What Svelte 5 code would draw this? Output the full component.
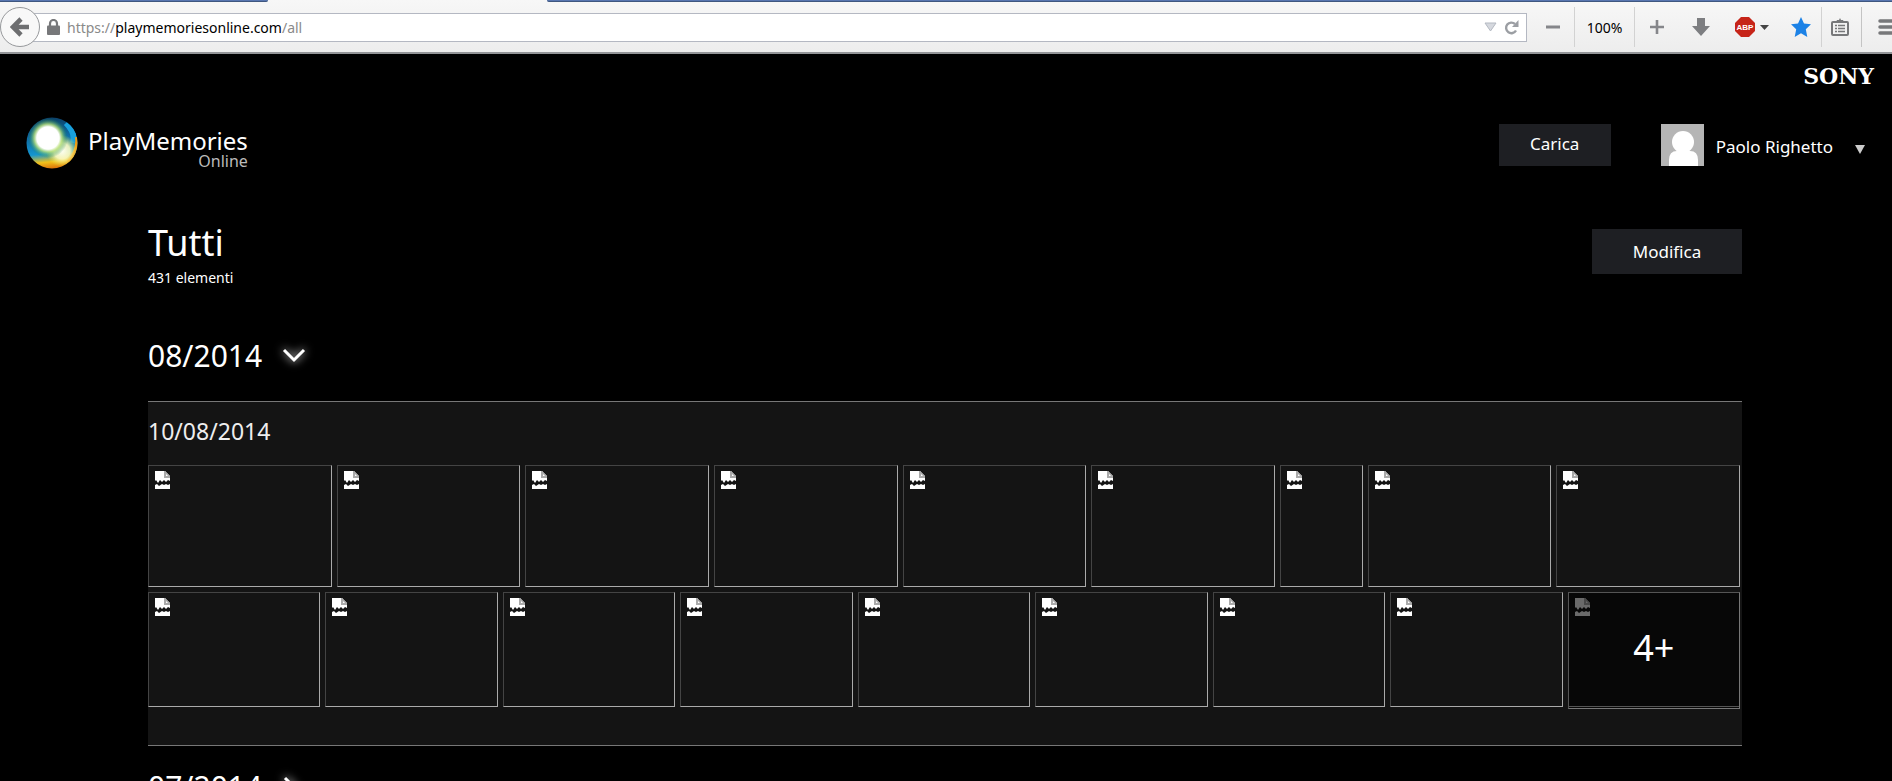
<script lang="ts">
    const rows = [
        { height: 122, spans: [184, 184, 184, 184, 184, 184, 83, 184, 184] },
        { height: 115, spans: [1, 1, 1, 1, 1, 1, 1, 1, 1] },
    ];

    let url = $state("https://playmemoriesonline.com/all");
</script>

{#snippet brokenImage()}
    <svg class="broken" width="16" height="18" viewBox="0 0 16 18">
        <path d="M0 0h10l5 5v5l-2-1-2 2-2-2-2 2-2-2-2 3-2-3-1 1z" fill="#fff" />
        <path d="M10 0l5 5v2H9V0z" fill="#aaa" />
        <path d="M11 3l2 2h-2z" fill="#fff" />
        <path d="M0 14l2-1 2 2 3-2 2 1 2-1 2 1 2-1v5H0z" fill="#fff" />
    </svg>
{/snippet}

<div class="browser">
    <div class="tabs">
        <div class="tab-left"></div>
        <div class="tab-right"></div>
    </div>
    <div class="toolbar">
        <button class="back" aria-label="Indietro">
            <svg width="20" height="20" viewBox="0 0 20 20">
                <path d="M11 2L3 10l8 8M4 10h15" fill="none" stroke="#6d6e70" stroke-width="4.6" />
            </svg>
        </button>
        <div class="address">
            <svg width="13" height="16" viewBox="0 0 13 16">
                <path d="M3 8V4.500a3.500 3.500 0 0 1 7 0V8" fill="none" stroke="#77787a" stroke-width="2.200" />
                <rect y="6.500" width="13" height="9.500" rx="1" fill="#77787a" />
            </svg>
            <label class="url">
                <span class="url-text"><span>https://</span>playmemoriesonline.com<span>/all</span></span>
                <input type="text" aria-label="Indirizzo" bind:value={url} />
            </label>
            <button aria-label="Cronologia">
                <svg width="13" height="10" viewBox="0 0 13 10">
                    <path d="M1 1h11L6.500 9z" fill="#d5d8de" stroke="#b4b9c2" />
                </svg>
            </button>
            <button aria-label="Ricarica">
                <svg width="15" height="15" viewBox="0 0 15 15">
                    <path d="M11 4A5.300 5.300 0 1 0 12 10.500" fill="none" stroke="#9b9ea3" stroke-width="2.400" />
                    <path d="M14.500 0v7H8z" fill="#9b9ea3" />
                </svg>
            </button>
        </div>
        <div class="tools">
            <button class="minus" aria-label="Riduci">
                <svg width="14" height="14" viewBox="0 0 14 14"><path d="M0 7h14" stroke="#85868a" stroke-width="3" /></svg>
            </button>
            <button class="zoom">100%</button>
            <button class="plus" aria-label="Ingrandisci">
                <svg width="14" height="14" viewBox="0 0 14 14"><path d="M0 7h14M7 0v14" stroke="#85868a" stroke-width="2.600" /></svg>
            </button>
            <button class="download" aria-label="Download">
                <svg width="18" height="18" viewBox="0 0 18 18"><path d="M5 0h8v8h5l-9 10L0 8h5z" fill="#7d7e81" /></svg>
            </button>
            <button class="abp" aria-label="Adblock Plus">
                <svg width="34" height="20" viewBox="0 0 34 20">
                    <path d="M6 0h8l6 6v8l-6 6H6l-6-6V6z" fill="#c62418" />
                    <text x="10" y="13" text-anchor="middle">ABP</text>
                    <path d="M25 8h9l-4.500 5z" fill="#444" />
                </svg>
            </button>
            <button class="star" aria-label="Segnalibro">
                <svg width="20" height="20" viewBox="0 0 20 20">
                    <path d="M10 0l3 6.500 7 .8-5.200 4.900L16.300 20 10 16.200 3.700 20l1.500-7.800L0 7.300l7-.8z" fill="#1c82e6" />
                </svg>
            </button>
            <button class="list" aria-label="Segnalibri">
                <svg width="18" height="18" viewBox="0 0 18 18">
                    <rect x="1" y="4" width="16" height="13" rx="1" fill="none" stroke="#77787a" stroke-width="2" />
                    <path d="M4 7.500h2M7 7.500h7M4 10.500h2M7 10.500h7M4 13.500h2M7 13.500h7" stroke="#77787a" stroke-width="1.500" />
                    <path d="M5 4l1-2h2l1-2 1 2h2l1 2z" fill="#77787a" />
                </svg>
            </button>
            <button class="menu" aria-label="Menu">
                <svg width="20" height="18" viewBox="0 0 20 18"><path d="M2 3h16M2 9h16M2 15h16" stroke="#77787a" stroke-width="3.500" stroke-linecap="round" /></svg>
            </button>
        </div>
    </div>
</div>

<div class="page">
    <div class="sony">SONY</div>
    <header>
        <a class="logo" href="/all">
            <svg width="52" height="52" viewBox="0 0 52 52">
                <defs>
                    <linearGradient id="ball" x1="0.400" y1="0" x2="0.500" y2="1">
                        <stop offset="0" stop-color="#0b3d63" />
                        <stop offset="0.400" stop-color="#0f6fa8" />
                        <stop offset="0.700" stop-color="#1596d0" />
                        <stop offset="0.860" stop-color="#f2c21c" />
                        <stop offset="1" stop-color="#dc6d08" />
                    </linearGradient>
                    <radialGradient id="glow">
                        <stop offset="0.560" stop-color="#fff" />
                        <stop offset="0.700" stop-color="#b9e27a" stop-opacity="0.800" />
                        <stop offset="1" stop-color="#0b7c52" stop-opacity="0" />
                    </radialGradient>
                    <radialGradient id="shine">
                        <stop offset="0" stop-color="#fffff0" />
                        <stop offset="0.500" stop-color="#fffbc0" stop-opacity="0.900" />
                        <stop offset="1" stop-color="#e6e33c" stop-opacity="0" />
                    </radialGradient>
                    <clipPath id="disc"><circle cx="26" cy="26" r="25.500" /></clipPath>
                </defs>
                <g clip-path="url(#disc)">
                    <rect width="52" height="52" fill="url(#ball)" />
                    <path d="M40 6Q50 16 47 26" fill="none" stroke="#18a0dc" stroke-width="6" />
                    <path d="M51 20Q53 33 42 45" fill="none" stroke="#f09a13" stroke-width="4" />
                    <circle cx="36" cy="34" r="16" fill="url(#shine)" />
                    <circle cx="22" cy="21" r="20" fill="url(#glow)" />
                </g>
            </svg>
            <span class="brand">PlayMemories<small>Online</small></span>
        </a>
        <button class="upload">Carica</button>
        <button class="user">
            <svg width="43" height="42" viewBox="0 0 43 42">
                <rect width="43" height="42" fill="#b5b5b5" />
                <circle cx="22" cy="18" r="11" fill="#fff" />
                <path d="M8 42v-6q0-9 8-9h13q8 0 8 9v6z" fill="#fff" />
            </svg>
            <span>Paolo Righetto</span>
            <svg class="caret" width="10" height="9" viewBox="0 0 10 9"><path d="M0 0h10L5 9z" fill="#ccc" /></svg>
        </button>
    </header>

    <main>
        <div class="title">
            <div>
                <h1>Tutti</h1>
                <p>431 elementi</p>
            </div>
            <button>Modifica</button>
        </div>

        <h2>
            08/2014
            <button class="toggle" aria-label="Chiudi">
                <svg width="22" height="14" viewBox="0 0 22 14"><path d="M1 1l10 10L21 1" /></svg>
            </button>
        </h2>
        <section>
            <h3>10/08/2014</h3>
            {#each rows as row, r}
                <div
                    class="row"
                    style="height: {row.height}px; grid-template-columns: {row.spans.map((s) => s + 'fr').join(' ')}"
                >
                    {#each row.spans as _, i}
                        {#if r === 1 && i === 8}
                            <a class="photo more" href="/all">
                                {@render brokenImage()}
                                <span>4+</span>
                            </a>
                        {:else}
                            <a class="photo" href="/all" aria-label="Foto">
                                {@render brokenImage()}
                            </a>
                        {/if}
                    {/each}
                </div>
            {/each}
        </section>

        <h2>
            07/2014
            <button class="toggle" aria-label="Apri">
                <svg width="14" height="20" viewBox="0 0 14 20"><path d="M2 1l9 9-9 9" /></svg>
            </button>
        </h2>
    </main>
</div>

<style>
    :global(body) {
        background: #000;
        overflow: hidden;
    }
    :global(#app) {
        height: 100vh;
        overflow: hidden;
        font-family: "Noto Sans", sans-serif;
        color: #fff;
    }
    button {
        border: 0;
        padding: 0;
        background: none;
        color: inherit;
        font: inherit;
    }
    svg {
        display: block;
        flex: none;
    }
    a {
        color: inherit;
        text-decoration: none;
    }
    .browser {
        height: 52px;
        background: linear-gradient(#f7f7f7, #ededed);
        border-bottom: 2px solid #939598;
    }
    .tabs {
        display: flex;
        justify-content: space-between;
        height: 2px;
    }
    .tab-left,
    .tab-right {
        background: #5876b0;
        border-bottom: 1px solid #3f5780;
        box-sizing: border-box;
    }
    .tab-left {
        width: 268px;
        border-bottom-right-radius: 4px;
    }
    .tab-right {
        flex: 1;
        margin-left: 279px;
        border-bottom-left-radius: 4px;
    }
    .toolbar {
        display: flex;
        align-items: center;
        height: 50px;
    }
    .back {
        display: flex;
        align-items: center;
        justify-content: center;
        box-sizing: border-box;
        width: 40px;
        height: 40px;
        border: 1px solid #97999c;
        border-radius: 50%;
        background: #f8f8f8;
        z-index: 1;
    }
    .address {
        flex: 1;
        display: flex;
        align-items: center;
        gap: 7px;
        box-sizing: border-box;
        height: 29px;
        margin-left: -8px;
        padding: 0 7px 0 14px;
        border: 1px solid #b4b8c2;
        background: #fff;
    }
    .url {
        flex: 1;
        display: grid;
        padding-top: 2px;
        font: 14px/24px "Noto Sans", sans-serif;
        color: #000;
    }
    .url-text,
    .url input {
        grid-area: 1 / 1;
    }
    .url-text span {
        color: #8a8a8a;
    }
    .url input {
        border: 0;
        padding: 0;
        background: none;
        color: transparent;
        font: inherit;
        outline: none;
    }
    .tools {
        display: flex;
        align-items: center;
        width: 365px;
        overflow: hidden;
        color: #000;
    }
    .tools button {
        display: flex;
        align-items: center;
        justify-content: center;
        flex: none;
        box-sizing: border-box;
        height: 40px;
    }
    .tools .minus {
        width: 48px;
        padding-left: 4px;
        border-right: 1px solid #d2d2d2;
    }
    .tools .zoom {
        width: 60px;
        border-right: 1px solid #d2d2d2;
        font-size: 14px;
    }
    .tools .plus {
        width: 44px;
    }
    .tools .download {
        width: 44px;
    }
    .tools .abp {
        width: 58px;
    }
    .tools .star {
        width: 40px;
    }
    .tools .list {
        width: 41px;
        padding-right: 4px;
        border-left: 1px solid #d2d2d2;
        border-right: 1px solid #c4c4c4;
    }
    .tools .menu {
        padding-left: 16px;
    }
    .abp text {
        font: bold 8px "Liberation Sans", sans-serif;
        fill: #fff;
    }
    .sony {
        padding: 12px 18px 0 0;
        font: bold 22px/20px "DejaVu Serif", serif;
        text-align: right;
    }
    header {
        display: flex;
        align-items: center;
        padding: 31px 27px 0 26px;
        font-size: 17px;
    }
    .logo {
        flex: 1;
        display: flex;
        align-items: center;
        gap: 10px;
    }
    .brand {
        display: flex;
        flex-direction: column;
        align-self: flex-end;
        font-size: 24px;
        line-height: 24px;
    }
    .brand small {
        align-self: flex-end;
        font-size: 16px;
        line-height: 16px;
        color: #bbb;
    }
    .upload {
        width: 112px;
        height: 42px;
        margin: 4px 50px 0 0;
        padding-bottom: 4px;
        background: #1e1f23;
    }
    .user {
        display: flex;
        align-items: center;
        gap: 12px;
        margin-top: 4px;
    }
    .user span {
        padding-top: 3px;
    }
    .caret {
        margin: 8px 0 0 10px;
    }
    main {
        padding: 0 150px 0 148px;
    }
    .title {
        display: flex;
        justify-content: space-between;
        align-items: flex-start;
        padding: 49px 0 27px;
    }
    .title button {
        width: 150px;
        height: 45px;
        margin-top: 11px;
        background: #1e1f23;
        font-size: 17px;
    }
    h1,
    h2,
    h3,
    p {
        margin: 0;
        font-weight: 400;
    }
    h1 {
        font-size: 36px;
        line-height: 50px;
    }
    p {
        font-size: 14px;
        line-height: 20px;
    }
    h2 {
        display: flex;
        align-items: center;
        gap: 21px;
        padding: 21px 0 25px;
        font-size: 30px;
        line-height: 40px;
    }
    .toggle svg {
        overflow: visible;
        filter: drop-shadow(0 0 5px #fff);
    }
    .toggle path {
        fill: none;
        stroke: #fff;
        stroke-width: 3;
    }
    section {
        padding: 0 2px 33px 0;
        border: solid #777;
        border-width: 1px 0;
        background: #141414;
    }
    h3 {
        padding: 13px 0 18px;
        font-size: 23px;
        line-height: 32px;
        color: #eee;
    }
    .row {
        display: grid;
        gap: 5px;
        margin-bottom: 5px;
    }
    .photo {
        padding: 5px 6px;
        border: 1px solid;
        border-color: #444 #aaa #aaa #444;
    }
    .more {
        display: grid;
        margin-bottom: -2px;
        border-color: #555 #777 #777 #555;
        background: #070707;
        box-shadow: inset 0 -1px #070707, inset 0 -2px #555;
    }
    .more svg,
    .more span {
        grid-area: 1 / 1;
    }
    .more svg {
        opacity: 0.4;
    }
    .more span {
        place-self: center;
        padding-bottom: 6px;
        font-size: 36px;
        line-height: 48px;
    }
</style>
